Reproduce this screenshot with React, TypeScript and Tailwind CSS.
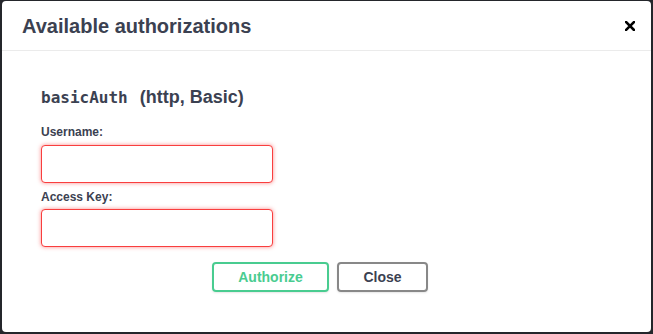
import { useState } from "react";

const sans = { fontFamily: '"Liberation Sans", Arial, sans-serif' };

const Field = ({ label, mt, gap }: { label: string; mt: string; gap: string }) => {
  const [value, setValue] = useState("");
  return (
    <div className={mt}>
      <label className="block text-[12px] leading-[16px] font-bold text-[#3b4151]">
        {label}
      </label>
      <input
        value={value}
        onChange={(e) => setValue(e.target.value)}
        className={`block w-[232px] h-[38px] px-[10px] ${gap} rounded-[4px] border border-[#f93e3e] bg-white outline-none shadow-[0_0_4px_rgba(249,62,62,0.6)] text-[14px]`}
      />
    </div>
  );
};

const App = () => {
  return (
    <div
      className="w-[653px] h-[334px] bg-[#24262b] pt-[1px] pl-[2px] pr-[2px] pb-[2px]"
      style={sans}
    >
      <div className="w-full h-full bg-white rounded-[4px] flex flex-col">
        {/* header */}
        <div className="h-[50px] shrink-0 flex items-center justify-between pl-[20px] pr-[14px] border-b border-[#ebebeb]">
          <h3 className="text-[20px] font-bold text-[#3b4151] leading-[24px]">
            Available authorizations
          </h3>
          <button className="w-[14px] h-[14px] flex items-center justify-center">
            <svg width="10" height="10" viewBox="0 0 10 10">
              <path
                d="M1 1 L9 9 M9 1 L1 9"
                stroke="#000"
                strokeWidth="2.5"
                strokeLinecap="square"
              />
            </svg>
          </button>
        </div>

        {/* body */}
        <div className="pl-[39px] pt-[35px] text-[#3b4151]">
          <h4 className="text-[18px] font-bold leading-[22px] flex items-baseline">
            <code
              className="text-[16px] font-bold mr-[12px]"
              style={{ fontFamily: '"DejaVu Sans Mono", monospace' }}
            >
              basicAuth
            </code>
            <span>(http, Basic)</span>
          </h4>

          <Field label="Username:" mt="mt-[15px]" gap="mt-[5px]" />
          <Field label="Access Key:" mt="mt-[6px]" gap="mt-[4px]" />

          <div className="flex justify-center gap-[8px] mt-[15px] pr-[52px]">
            <button className="h-[30px] w-[117px] rounded-[4px] border-2 border-[#49cc90] text-[#49cc90] text-[14px] font-bold shadow-[0_1px_2px_rgba(0,0,0,0.1)]">
              Authorize
            </button>
            <button className="h-[30px] w-[91px] rounded-[4px] border-2 border-[#888888] text-[#3b4151] text-[14px] font-bold shadow-[0_1px_2px_rgba(0,0,0,0.1)]">
              Close
            </button>
          </div>
        </div>
      </div>
    </div>
  );
};

export default App;
